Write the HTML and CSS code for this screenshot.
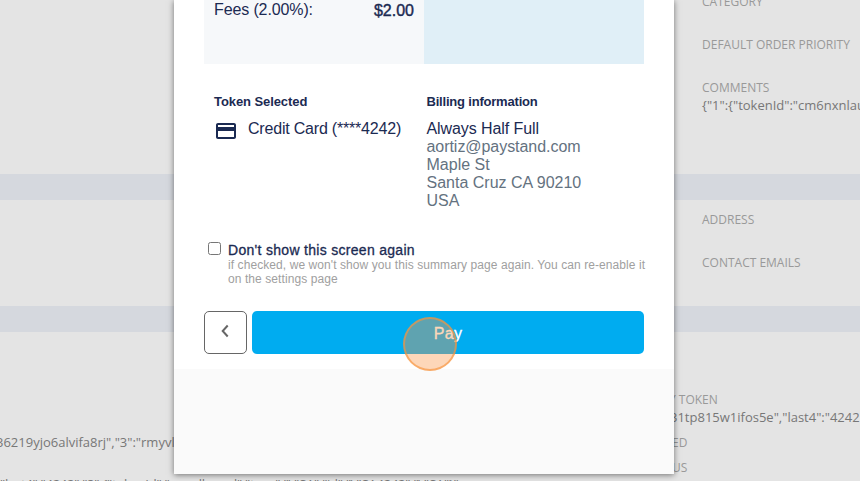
FILE: index.html
```html
<!DOCTYPE html>
<html lang="en">
<head>
    <meta charset="UTF-8">
    <meta name="viewport" content="width=device-width, initial-scale=1.0">
    <title>Payment Summary</title>
    <link rel="stylesheet" href="styles.css">
</head>
<body>
    <div class="record">
        <section class="record-main">
            <div class="label">CATEGORY</div>
            <div class="label">DEFAULT ORDER PRIORITY</div>
            <div class="label">COMMENTS</div>
            <div class="value">{"1":{"tokenId":"cm6nxnlau</div>
        </section>
        <div class="band"></div>
        <section class="record-contact">
            <div class="label">ADDRESS</div>
            <div class="label">CONTACT EMAILS</div>
        </section>
        <div class="band"></div>
        <section class="record-tokens">
            <div class="left-col">
                <div class="value token-list">36219yjo6alvifa8rj","3":"rmyvl</div>
                <div class="value token-json">"last4":"4242","3":{"tokenId":"rmyvlbrand","type":"VISA","id":"VISA4242":"VISA"}"</div>
            </div>
            <div class="right-col">
                <div class="label">Y TOKEN</div>
                <div class="value">31tp815w1ifos5e","last4":"4242</div>
                <div class="label">ED</div>
                <div class="label">US</div>
            </div>
        </section>
    </div>

    <div class="modal">
        <div class="modal-body">
            <div class="summary">
                <div class="fees">
                    <span class="fees-label">Fees (2.00%):</span>
                    <span class="fees-amount">$2.00</span>
                </div>
                <div class="total"></div>
            </div>
            <div class="details">
                <div class="token">
                    <h3>Token Selected</h3>
                    <div class="card-row">
                        <svg class="card-icon" width="24" height="24" viewBox="0 0 24 24">
                            <path fill="#1b2a52" d="M20 4H4c-1.11 0-1.99.89-1.99 2L2 18c0 1.11.89 2 2 2h16c1.11 0 2-.89 2-2V6c0-1.11-.89-2-2-2zm0 14H4v-6h16v6zm0-10H4V6h16v2z"/>
                        </svg>
                        <span class="card-name">Credit Card (****4242)</span>
                    </div>
                </div>
                <div class="billing">
                    <h3>Billing information</h3>
                    <div class="billing-name">Always Half Full</div>
                    <div class="billing-email">aortiz@paystand.com</div>
                    <div>Maple St</div>
                    <div>Santa Cruz CA 90210</div>
                    <div>USA</div>
                </div>
            </div>
            <label class="skip">
                <input type="checkbox" class="skip-box">
                <span class="skip-text">
                    <span class="skip-title">Don't show this screen again</span>
                    <span class="skip-hint">if checked, we won't show you this summary page again. You can re-enable it<br>on the settings page</span>
                </span>
            </label>
            <div class="actions">
                <button class="back">
                    <svg width="12" height="14" viewBox="0 0 12 14">
                        <path d="M8.7 1.5 3.7 7l5 5.5" fill="none" stroke="#666" stroke-width="2"/>
                    </svg>
                </button>
                <button class="pay">Pay</button>
            </div>
        </div>
    </div>
    <div class="click-marker"></div>
</body>
</html>
```
FILE: styles.css
```css
* {
    box-sizing: border-box;
}
body {
    margin: 0;
    width: 860px;
    height: 481px;
    overflow: hidden;
    position: relative;
    background: #e4e4e4;
    font-family: "Liberation Sans", Arial, sans-serif;
}

/* record page */
.record {
    height: 481px;
    overflow: hidden;
    font-family: "Open Sans", sans-serif;
    font-size: 12px;
    line-height: 18px;
    white-space: nowrap;
}
.label {
    color: #999;
}
.value {
    color: #777;
    font-size: 13px;
}
.band {
    height: 26px;
    background: #d5d8de;
}
.record-main {
    height: 174px;
    padding-left: 702px;
    overflow: hidden;
}
.record-main .label {
    margin-bottom: 25px;
}
.record-main .label:first-child {
    margin-top: -7px;
}
.record-main .label:nth-child(3) {
    margin-bottom: -1px;
}
.record-contact {
    height: 106px;
    padding: 11px 0 0 702px;
}
.record-contact .label {
    margin-bottom: 25px;
}
.record-tokens {
    display: flex;
    height: 149px;
}
.left-col {
    width: 667px;
    padding-top: 101px;
}
.token-list {
    margin-left: -4px;
}
.token-json {
    margin-top: 24px;
    letter-spacing: -0.25px;
}
.right-col {
    padding-top: 59px;
}
.right-col .label:first-child {
    padding-left: 2px;
}
.right-col .value {
    margin-top: -1px;
    padding-left: 3px;
}
.right-col .label:nth-child(3) {
    margin: 8px 0 7px;
}
.right-col .label:nth-child(n+3) {
    padding-left: 5px;
}

/* payment modal */
.modal {
    position: absolute;
    top: 0;
    left: 174px;
    width: 500px;
    height: 474px;
    background: #fafafa;
    box-shadow: 0 1px 6px rgba(0, 0, 0, 0.5);
    color: #1b2a52;
    font-size: 16px;
}
.modal-body {
    height: 369px;
    padding: 0 30px;
    background: #fff;
}
.summary {
    display: flex;
    height: 64px;
}
.fees,
.total {
    width: 220px;
}
.fees {
    display: flex;
    justify-content: space-between;
    padding: 1px 10px 0;
    background: #f6f8fa;
    line-height: 18px;
}
.fees-label {
    letter-spacing: -0.12px;
}
.fees-amount {
    padding-top: 1px;
    -webkit-text-stroke: 0.4px;
}
.total {
    background: #e0eff7;
}
.details {
    display: flex;
    height: 177px;
    padding: 30px 0 0 10px;
}
.token {
    width: 212.5px;
}
h3 {
    margin: 0 0 10px;
    color: #1b2a52;
    font-size: 13px;
    line-height: 16px;
    letter-spacing: -0.08px;
}
.billing h3 {
    letter-spacing: -0.2px;
}
.card-row {
    display: flex;
    line-height: 18px;
}
.card-icon {
    margin: -1px 10px 0 0;
}
.card-name {
    letter-spacing: -0.2px;
}
.billing {
    color: #64727f;
    line-height: 18px;
}
.billing-name {
    color: #1b2a52;
    letter-spacing: -0.08px;
}
.billing-email {
    letter-spacing: -0.05px;
}
.skip {
    display: flex;
    height: 70px;
}
.skip-box {
    width: 13px;
    height: 13px;
    margin: 1px 7px 0 4px;
}
.skip-text {
    padding-top: 1px;
    white-space: nowrap;
}
.skip-title {
    display: block;
    font-size: 14px;
    line-height: 16px;
    letter-spacing: 0.3px;
    -webkit-text-stroke: 0.3px;
}
.skip-hint {
    display: block;
    color: #a0a0a0;
    font-size: 12px;
    line-height: 14px;
    letter-spacing: 0.08px;
}
.actions {
    display: flex;
    gap: 5px;
    height: 43px;
}
.back {
    display: flex;
    align-items: center;
    justify-content: center;
    width: 43px;
    padding: 0 1px 3px 0;
    border: 1px solid #666;
    border-radius: 5px;
    background: #fff;
}
.pay {
    width: 392px;
    padding: 3px 0 0;
    border: none;
    border-radius: 5px;
    background: #00acf0;
    color: #fff;
    font-family: inherit;
    font-size: 16px;
    letter-spacing: 0.3px;
    -webkit-text-stroke: 0.3px;
}
.click-marker {
    position: absolute;
    top: 317px;
    left: 403px;
    width: 54px;
    height: 54px;
    border: 2px solid rgba(247, 147, 62, 0.65);
    border-radius: 50%;
    background: rgba(249, 151, 72, 0.38);
}
```
